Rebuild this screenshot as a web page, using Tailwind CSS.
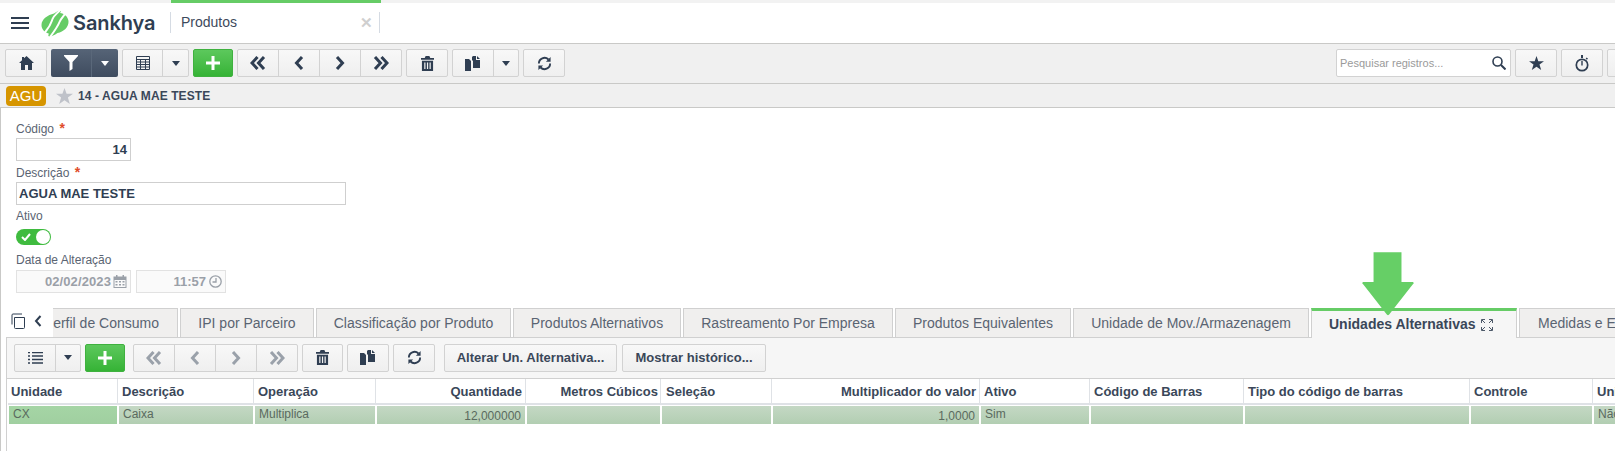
<!DOCTYPE html>
<html lang="en">
<head>
<meta charset="UTF-8" />
<title>Produtos</title>
<script src="https://cdn.jsdelivr.net/npm/@tailwindcss/browser@4"></script>
</head>
<body class="bg-white font-['Liberation_Sans',Arial,sans-serif] text-[#2f3e52]">
<svg class="hidden">
  <symbol id="i-caret" viewBox="0 0 8 5"><path d="M0 0h8L4 5z" fill="currentColor"/></symbol>
  <symbol id="i-first" viewBox="0 0 16 14"><path d="M7.5 1 2 7l5.500 6M14 1 8.500 7l5.500 6" fill="none" stroke="currentColor" stroke-width="3"/></symbol>
  <symbol id="i-prev" viewBox="0 0 10 14"><path d="M8 1 2.500 7 8 13" fill="none" stroke="currentColor" stroke-width="3"/></symbol>
  <symbol id="i-next" viewBox="0 0 10 14"><path d="M2 1l5.500 6L2 13" fill="none" stroke="currentColor" stroke-width="3"/></symbol>
  <symbol id="i-last" viewBox="0 0 16 14"><path d="M2 1l5.500 6L2 13M8.500 1 14 7l-5.500 6" fill="none" stroke="currentColor" stroke-width="3"/></symbol>
  <symbol id="i-trash" viewBox="0 0 14 16"><path d="M5 0h4l1 2h4v2H0V2h4zM1 5h12v11H1zm2.500 2v7h1.300V7zm2.900 0v7h1.300V7zm2.800 0v7h1.300V7z" fill="currentColor" fill-rule="evenodd"/></symbol>
  <symbol id="i-copy" viewBox="0 0 16 15"><path d="M0 3h4l2 2v10H0zM8 0h3v4h4v8H8V5L7 4V1z" fill="currentColor"/><path d="M12 0l3 3h-3z" fill="currentColor"/></symbol>
  <symbol id="i-sync" viewBox="0 0 16 16"><path d="M2 8a6 6 0 0 1 10.200-4.300M14 8a6 6 0 0 1-10.200 4.300" fill="none" stroke="currentColor" stroke-width="2"/><path d="M14.500 1v5h-5zM1.500 15v-5h5z" fill="currentColor"/></symbol>
  <symbol id="i-plus" viewBox="0 0 14 14"><path d="M5.500 0h3v5.500H14v3H8.500V14h-3V8.500H0v-3h5.500z" fill="currentColor"/></symbol>
</svg>

<div class="w-[1615px] h-[451px] overflow-hidden relative">
  <!-- top bar -->
  <div class="h-[3px] bg-[#f2f2f2] relative">
    <div class="absolute left-[171px] w-[210px] top-[0px] h-[3px] bg-[#66cc66]"></div>
  </div>
  <header class="h-[40px] flex items-center bg-white">
    <div class="ml-[11px] w-[18px] flex flex-col gap-[3px]">
      <span class="h-[2px] bg-[#2f3e52]"></span><span class="h-[2px] bg-[#2f3e52]"></span><span class="h-[2px] bg-[#2f3e52]"></span>
    </div>
    <svg class="ml-[12px] w-[28px] h-[27px] shrink-0" viewBox="0 0 28 27">
      <path d="M19 .5c1 0 1 1 .5 1.800L19 3c4 .5 8 3.500 8.500 8 .5 6-5 11-11 12-3 2-6 3.500-8 3.500-1 0-1.500-1-1-2l.5-.8C3 22 .5 19 .5 15 .5 9 7 5 13 3.500 15 2 17.500.5 19 .5z" fill="#66cc66"/>
      <path d="M20 -1C17 3 13 5 11.500 9 10 13 10 15 5 21 3 24 2 25 1 27" fill="none" stroke="#fff" stroke-width="2"/>
      <path d="M26 1C23 6 20 8 18.500 12 17 16 15 19 9 27" fill="none" stroke="#fff" stroke-width="2"/>
    </svg>
    <span class="ml-[4px] w-[85px] font-['Inter',sans-serif] font-semibold text-[20px] leading-none tracking-[-0.1px] text-[#2f3e52]">Sankhya</span>
    <div class="ml-[12px] w-[210px] h-[21px] mt-[-1px] border-x border-[#d5dbe3] flex items-center justify-between pl-[10px] pr-[6px]">
      <span class="text-[14px] text-[#3d4a5c]">Produtos</span>
      <span class="text-[#cfcfcf] text-[15px] leading-none font-bold">✕</span>
    </div>
  </header>

  <!-- main toolbar -->
  <div class="h-[41px] bg-[#f0f0f0] border-y border-[#c9c9c7] flex items-center pl-[5px] pr-0 pb-[1px] gap-[4px]">
    <button class="w-[42px] h-[28px] flex items-center justify-center rounded-[2px] border border-[#d2d2d2] bg-gradient-to-b from-[#f8f8f8] to-[#efefef]">
      <svg class="w-[15px] h-[14px]" viewBox="0 0 15 14"><path d="M7.500 0 15 7h-2v7H9V9H6v5H2V7H0l3-2.800V1h2v1.300z" fill="#2f3e52"/></svg>
    </button>
    <div class="w-[67px] h-[28px] flex rounded-[2px] bg-gradient-to-b from-[#566477] to-[#3f4c5f]">
      <span class="w-[41px] flex items-center justify-center border-r border-[#5a687a]">
        <svg class="w-[14px] h-[16px]" viewBox="0 0 14 16"><path d="M0 0h14v1L8.500 7v7l-3 2V7L0 1z" fill="#fff"/></svg>
      </span>
      <span class="flex-1 flex items-center justify-center"><svg class="w-[8px] h-[5px] text-white"><use href="#i-caret"/></svg></span>
    </div>
    <div class="w-[67px] h-[28px] flex rounded-[2px] border border-[#d2d2d2] bg-gradient-to-b from-[#f8f8f8] to-[#efefef]">
      <span class="w-[40px] flex items-center justify-center border-r border-[#d2d2d2]">
        <svg class="w-[14px] h-[14px]" viewBox="0 0 14 14"><path d="M.5.500h13v13H.5zM.5 3.500h13M.5 6h13M.5 8.500h13M.5 11h13M4.500 3.500v10M9.500 3.500v10" fill="none" stroke="#2f3e52"/></svg>
      </span>
      <span class="flex-1 flex items-center justify-center"><svg class="w-[8px] h-[5px]"><use href="#i-caret"/></svg></span>
    </div>
    <button class="w-[40px] h-[28px] flex items-center justify-center rounded-[2px] border border-[#3fb13f] bg-gradient-to-b from-[#5cc85c] to-[#35b335] text-white">
      <svg class="w-[14px] h-[14px]"><use href="#i-plus"/></svg>
    </button>
    <div class="w-[165px] h-[28px] flex rounded-[2px] border border-[#d2d2d2] bg-gradient-to-b from-[#f8f8f8] to-[#efefef] divide-x divide-[#d2d2d2]">
      <span class="flex-1 flex items-center justify-center"><svg class="w-[16px] h-[14px]"><use href="#i-first"/></svg></span>
      <span class="flex-1 flex items-center justify-center"><svg class="w-[10px] h-[14px]"><use href="#i-prev"/></svg></span>
      <span class="flex-1 flex items-center justify-center"><svg class="w-[10px] h-[14px]"><use href="#i-next"/></svg></span>
      <span class="flex-1 flex items-center justify-center"><svg class="w-[16px] h-[14px]"><use href="#i-last"/></svg></span>
    </div>
    <button class="w-[42px] h-[28px] flex items-center justify-center rounded-[2px] border border-[#d2d2d2] bg-gradient-to-b from-[#f8f8f8] to-[#efefef]">
      <svg class="w-[13px] h-[15px]"><use href="#i-trash"/></svg>
    </button>
    <div class="w-[67px] h-[28px] flex rounded-[2px] border border-[#d2d2d2] bg-gradient-to-b from-[#f8f8f8] to-[#efefef]">
      <span class="w-[41px] flex items-center justify-center border-r border-[#d2d2d2]"><svg class="w-[16px] h-[15px]"><use href="#i-copy"/></svg></span>
      <span class="flex-1 flex items-center justify-center"><svg class="w-[8px] h-[5px]"><use href="#i-caret"/></svg></span>
    </div>
    <button class="w-[42px] h-[28px] flex items-center justify-center rounded-[2px] border border-[#d2d2d2] bg-gradient-to-b from-[#f8f8f8] to-[#efefef]">
      <svg class="w-[15px] h-[15px]"><use href="#i-sync"/></svg>
    </button>

    <div class="ml-auto w-[175px] h-[28px] flex items-center justify-between pl-[3px] pr-[4px] rounded-[2px] border border-[#d2d2d2] bg-white">
      <span class="text-[11px] text-[#9a9a9a]">Pesquisar registros...</span>
      <svg class="w-[14px] h-[14px]" viewBox="0 0 14 14"><circle cx="5.500" cy="5.500" r="4.500" fill="none" stroke="#2f3e52" stroke-width="1.600"/><path d="M9 9l4.500 4.500" stroke="#2f3e52" stroke-width="2"/></svg>
    </div>
    <button class="w-[42px] h-[28px] flex items-center justify-center rounded-[2px] border border-[#d2d2d2] bg-gradient-to-b from-[#f8f8f8] to-[#efefef]">
      <svg class="w-[15px] h-[14px]" viewBox="0 0 15 14"><path d="M7.500 0l1.800 5.200H15l-4.500 3.300L12.200 14 7.500 10.700 2.800 14l1.700-5.500L0 5.200h5.700z" fill="#2f3e52"/></svg>
    </button>
    <button class="w-[42px] h-[28px] flex items-center justify-center rounded-[2px] border border-[#d2d2d2] bg-gradient-to-b from-[#f8f8f8] to-[#efefef]">
      <svg class="w-[14px] h-[17px]" viewBox="0 0 14 17"><circle cx="7" cy="10" r="5.700" fill="none" stroke="#2f3e52" stroke-width="1.700"/><path d="M6 0h2v3H6zM6.300 6h1.400v4.500H6.300zM11.500 2.500l1.500 1-1 1.200-1.300-1z" fill="#2f3e52"/></svg>
    </button>
    <button class="w-[42px] h-[28px] shrink-0 mr-[-34px] rounded-[2px] border border-[#d2d2d2] bg-gradient-to-b from-[#f8f8f8] to-[#efefef]"></button>
  </div>

  <!-- record title -->
  <div class="h-[24px] bg-[#f0f0f0] border-b border-[#c9c9c7] flex items-center pl-[6px]">
    <span class="w-[40px] h-[20px] rounded-[4px] bg-[#d69500] text-white text-[15px] leading-[20px] text-center">AGU</span>
    <svg class="ml-[10px] w-[17px] h-[16px]" viewBox="0 0 17 16"><path d="M8.500 0l2.100 5.800H17l-5.100 3.800L13.800 16 8.500 12.200 3.200 16l1.900-6.400L0 5.800h6.400z" fill="#bfc2c9"/></svg>
    <span class="ml-[5px] text-[12px] font-bold tracking-[0.1px] text-[#3a4759]">14 - AGUA MAE TESTE</span>
  </div>

  <!-- form -->
  <div class="border-l border-[#c9c9c7] h-[343px] flex flex-col">
    <div class="pl-[15px] pt-[12px] h-[200px] flex flex-col">
      <label class="h-[18px] text-[12px] leading-[16px] text-[#5a6472]">Código <span class="text-[#e04b2a] text-[14px] font-bold ml-[2px]">*</span></label>
      <div class="w-[115px] h-[23px] border border-[#cfcfcf] text-right pr-[3px] text-[13px] leading-[21px] font-bold">14</div>
      <label class="mt-[3px] h-[18px] text-[12px] leading-[16px] text-[#5a6472]">Descrição <span class="text-[#e04b2a] text-[14px] font-bold ml-[2px]">*</span></label>
      <div class="w-[330px] h-[23px] border border-[#cfcfcf] pl-[2px] text-[13px] leading-[21px] font-bold">AGUA MAE TESTE</div>
      <label class="mt-[3px] h-[18px] text-[12px] leading-[16px] text-[#5a6472]">Ativo</label>
      <div class="mt-[3px] w-[35px] h-[16px] rounded-full bg-[#3fbb3f] flex items-center justify-between pl-[5px] pr-[1px]">
        <svg class="w-[10px] h-[8px]" viewBox="0 0 10 8"><path d="M1 4l3 3 5-6" fill="none" stroke="#fff" stroke-width="2"/></svg>
        <span class="w-[14px] h-[14px] rounded-full bg-white"></span>
      </div>
      <label class="mt-[7px] h-[18px] text-[12px] leading-[16px] text-[#5a6472]">Data de Alteração</label>
      <div class="flex gap-[5px]">
        <div class="w-[115px] h-[23px] border border-[#e2e2e2] bg-[#fafafa] flex items-center justify-end gap-[2px] pr-[3px] text-[13px] font-bold tracking-[0.1px] text-[#9aa0a8]">
          02/02/2023
          <svg class="w-[14px] h-[13px]" viewBox="0 0 13 13"><path d="M0 1.500h2.500V0h1.500v1.500h5V0h1.500v1.500H13V13H0zM1 5v7h11V5zm1 1h2v1.500H2zm3.500 0h2v1.500h-2zM9 6h2v1.500H9zM2 9h2v1.500H2zm3.500 0h2v1.500h-2zM9 9h2v1.500H9z" fill="#9aa0a8" fill-rule="evenodd"/></svg>
        </div>
        <div class="w-[90px] h-[23px] border border-[#e2e2e2] bg-[#fafafa] flex items-center justify-end gap-[3px] pr-[3px] text-[13px] font-bold text-[#9aa0a8]">
          11:57
          <svg class="w-[13px] h-[13px]" viewBox="0 0 13 13"><circle cx="6.500" cy="6.500" r="5.700" fill="none" stroke="#9aa0a8" stroke-width="1.300"/><path d="M7 3v4H3.500" fill="none" stroke="#9aa0a8" stroke-width="1.300"/></svg>
        </div>
      </div>
    </div>

    <!-- tabs -->
    <div class="h-[29px] flex items-end relative">
      <div class="absolute left-0 top-0 w-[52px] h-[29px] bg-white z-10 flex items-center pl-[9px] pb-[3px] gap-[8px]">
        <svg class="w-[16px] h-[16px]" viewBox="0 0 16 16"><path d="M4.500 4.500h10v10a1 1 0 0 1-1 1h-8a1 1 0 0 1-1-1zM2 11.500V2a1 1 0 0 1 1-1h9" fill="none" stroke="#2f3e52"/></svg>
        <svg class="w-[8px] h-[12px]" viewBox="0 0 8 12"><path d="M6.500 1 2 6l4.500 5" fill="none" stroke="#2f3e52" stroke-width="2"/></svg>
      </div>
      <div class="flex ml-[5px] gap-[2px] text-[14px] text-[#5a6472] whitespace-nowrap">
        <span class="w-[172px] h-[29px] pr-[18px] text-right leading-[28px] bg-[#f0efee] border border-b-0 border-[#d0d0d0]">Perfil de Consumo</span>
        <span class="w-[134px] h-[29px] text-center leading-[28px] bg-[#f0efee] border border-b-0 border-[#d0d0d0]">IPI por Parceiro</span>
        <span class="w-[195px] h-[29px] text-center leading-[28px] bg-[#f0efee] border border-b-0 border-[#d0d0d0]">Classificação por Produto</span>
        <span class="w-[168px] h-[29px] text-center leading-[28px] bg-[#f0efee] border border-b-0 border-[#d0d0d0]">Produtos Alternativos</span>
        <span class="w-[210px] h-[29px] text-center leading-[28px] bg-[#f0efee] border border-b-0 border-[#d0d0d0]">Rastreamento Por Empresa</span>
        <span class="w-[176px] h-[29px] text-center leading-[28px] bg-[#f0efee] border border-b-0 border-[#d0d0d0]">Produtos Equivalentes</span>
        <span class="w-[236px] h-[29px] text-center leading-[28px] bg-[#f0efee] border border-b-0 border-[#d0d0d0]">Unidade de Mov./Armazenagem</span>
        <span class="w-[206px] h-[30px] mb-[-1px] z-10 flex items-center pl-[17px] gap-[5px] bg-[#f6f6f6] border-x border-[#d0d0d0] border-t-[3px] border-t-[#66cc66] font-bold text-[#3a4759]">Unidades Alternativas
          <svg class="w-[12px] h-[12px]" viewBox="0 0 12 12"><path d="M.5 4V.5H4M8 .5h3.500V4M.5 8v3.500H4M8 11.500h3.500V8M1 1l3 3M11 1 8 4M1 11l3-3M11 11 8 8" fill="none" stroke="#3a4759" stroke-width=".9"/></svg>
        </span>
        <span class="w-[180px] h-[29px] pl-[18px] leading-[28px] bg-[#f0efee] border border-b-0 border-[#d0d0d0]">Medidas e Estoque</span>
      </div>
    </div>

    <!-- panel -->
    <div class="ml-[5px] flex-1 border-l border-t border-[#d0d0d0]">
      <div class="h-[41px] bg-[#f6f6f6] border-b border-[#d0d0d0] flex items-center pl-[7px] pb-[1px] gap-[4px]">
        <div class="w-[67px] h-[28px] flex rounded-[2px] border border-[#d2d2d2] bg-gradient-to-b from-[#f8f8f8] to-[#efefef]">
          <span class="w-[41px] flex items-center justify-center border-r border-[#d2d2d2]">
            <svg class="w-[15px] h-[12px]" viewBox="0 0 15 12"><path d="M0 .5h2M4 .5h11M0 4h2M4 4h11M0 7.500h2M4 7.500h11M0 11h2M4 11h11" stroke="#2f3e52" stroke-width="1.300"/></svg>
          </span>
          <span class="flex-1 flex items-center justify-center"><svg class="w-[8px] h-[5px]"><use href="#i-caret"/></svg></span>
        </div>
        <button class="w-[40px] h-[28px] flex items-center justify-center rounded-[2px] border border-[#3fb13f] bg-gradient-to-b from-[#5cc85c] to-[#35b335] text-white">
          <svg class="w-[14px] h-[14px]"><use href="#i-plus"/></svg>
        </button>
        <div class="ml-[4px] w-[165px] h-[28px] flex rounded-[2px] border border-[#d2d2d2] bg-gradient-to-b from-[#f8f8f8] to-[#efefef] divide-x divide-[#d2d2d2] text-[#9aa1aa]">
          <span class="flex-1 flex items-center justify-center"><svg class="w-[16px] h-[14px]"><use href="#i-first"/></svg></span>
          <span class="flex-1 flex items-center justify-center"><svg class="w-[10px] h-[14px]"><use href="#i-prev"/></svg></span>
          <span class="flex-1 flex items-center justify-center"><svg class="w-[10px] h-[14px]"><use href="#i-next"/></svg></span>
          <span class="flex-1 flex items-center justify-center"><svg class="w-[16px] h-[14px]"><use href="#i-last"/></svg></span>
        </div>
        <button class="w-[41px] h-[28px] flex items-center justify-center rounded-[2px] border border-[#d2d2d2] bg-gradient-to-b from-[#f8f8f8] to-[#efefef]">
          <svg class="w-[13px] h-[15px]"><use href="#i-trash"/></svg>
        </button>
        <button class="w-[42px] h-[28px] flex items-center justify-center rounded-[2px] border border-[#d2d2d2] bg-gradient-to-b from-[#f8f8f8] to-[#efefef]">
          <svg class="w-[16px] h-[15px]"><use href="#i-copy"/></svg>
        </button>
        <button class="w-[42px] h-[28px] flex items-center justify-center rounded-[2px] border border-[#d2d2d2] bg-gradient-to-b from-[#f8f8f8] to-[#efefef]">
          <svg class="w-[15px] h-[15px]"><use href="#i-sync"/></svg>
        </button>
        <button class="ml-[5px] w-[173px] h-[28px] rounded-[2px] border border-[#d2d2d2] bg-gradient-to-b from-[#f8f8f8] to-[#efefef] text-[13px] font-bold text-[#3a4759]">Alterar Un. Alternativa...</button>
        <button class="ml-[1px] w-[144px] h-[28px] rounded-[2px] border border-[#d2d2d2] bg-gradient-to-b from-[#f8f8f8] to-[#efefef] text-[13px] font-bold text-[#3a4759]">Mostrar histórico...</button>
      </div>

      <!-- grid -->
      <div class="grid grid-cols-[110px_136px_122px_150px_135px_111px_208px_110px_154px_226px_123px_100px] w-[1700px] ml-[1px] whitespace-nowrap">
        <div class="h-[26px] border-r border-b-2 border-[#dfe2e6] pl-[3px] text-[13px] leading-[25px] font-bold text-[#3a4759]">Unidade</div>
        <div class="h-[26px] border-r border-b-2 border-[#dfe2e6] px-[4px] text-[13px] leading-[25px] font-bold text-[#3a4759]">Descrição</div>
        <div class="h-[26px] border-r border-b-2 border-[#dfe2e6] px-[4px] text-[13px] leading-[25px] font-bold text-[#3a4759]">Operação</div>
        <div class="h-[26px] border-r border-b-2 border-[#dfe2e6] pr-[3px] text-[13px] leading-[25px] font-bold text-[#3a4759] text-right">Quantidade</div>
        <div class="h-[26px] border-r border-b-2 border-[#dfe2e6] pr-[2px] text-[13px] leading-[25px] font-bold text-[#3a4759] text-right">Metros Cúbicos</div>
        <div class="h-[26px] border-r border-b-2 border-[#dfe2e6] pl-[5px] text-[13px] leading-[25px] font-bold text-[#3a4759]">Seleção</div>
        <div class="h-[26px] border-r border-b-2 border-[#dfe2e6] pr-[3px] text-[13px] leading-[25px] font-bold text-[#3a4759] text-right">Multiplicador do valor</div>
        <div class="h-[26px] border-r border-b-2 border-[#dfe2e6] px-[4px] text-[13px] leading-[25px] font-bold text-[#3a4759]">Ativo</div>
        <div class="h-[26px] border-r border-b-2 border-[#dfe2e6] px-[4px] text-[13px] leading-[25px] font-bold text-[#3a4759]">Código de Barras</div>
        <div class="h-[26px] border-r border-b-2 border-[#dfe2e6] px-[4px] text-[13px] leading-[25px] font-bold text-[#3a4759]">Tipo do código de barras</div>
        <div class="h-[26px] border-r border-b-2 border-[#dfe2e6] px-[4px] text-[13px] leading-[25px] font-bold text-[#3a4759]">Controle</div>
        <div class="h-[26px] border-b-2 border-[#dfe2e6] px-[4px] text-[13px] leading-[25px] font-bold text-[#3a4759]">Unidade</div>

        <div class="mt-[1px] h-[18px] ml-[1px] mr-[1px] bg-gradient-to-b from-[#a5d5a5] to-[#a0cfa0] px-[4px] text-[12px] leading-[17px] text-[#5a6a5e]">CX</div>
        <div class="mt-[1px] h-[18px] ml-[1px] mr-[1px] bg-gradient-to-b from-[#c4d8c4] to-[#b2ceb2] px-[4px] text-[12px] leading-[17px] text-[#5a6a5e]">Caixa</div>
        <div class="mt-[1px] h-[18px] ml-[1px] mr-[1px] bg-gradient-to-b from-[#c4d8c4] to-[#b2ceb2] px-[4px] text-[12px] leading-[17px] text-[#5a6a5e]">Multiplica</div>
        <div class="mt-[1px] h-[18px] ml-[1px] mr-[1px] bg-gradient-to-b from-[#c4d8c4] to-[#b2ceb2] px-[4px] text-[12px] leading-[21px] text-[#5a6a5e] text-right">12,000000</div>
        <div class="mt-[1px] h-[18px] ml-[1px] mr-[1px] bg-gradient-to-b from-[#c4d8c4] to-[#b2ceb2]"></div>
        <div class="mt-[1px] h-[18px] ml-[1px] mr-[1px] bg-gradient-to-b from-[#c4d8c4] to-[#b2ceb2]"></div>
        <div class="mt-[1px] h-[18px] ml-[1px] mr-[1px] bg-gradient-to-b from-[#c4d8c4] to-[#b2ceb2] px-[4px] text-[12px] leading-[21px] text-[#5a6a5e] text-right">1,0000</div>
        <div class="mt-[1px] h-[18px] ml-[1px] mr-[1px] bg-gradient-to-b from-[#c4d8c4] to-[#b2ceb2] px-[4px] text-[12px] leading-[17px] text-[#5a6a5e]">Sim</div>
        <div class="mt-[1px] h-[18px] ml-[1px] mr-[1px] bg-gradient-to-b from-[#c4d8c4] to-[#b2ceb2]"></div>
        <div class="mt-[1px] h-[18px] ml-[1px] mr-[1px] bg-gradient-to-b from-[#c4d8c4] to-[#b2ceb2]"></div>
        <div class="mt-[1px] h-[18px] ml-[1px] mr-[1px] bg-gradient-to-b from-[#c4d8c4] to-[#b2ceb2]"></div>
        <div class="mt-[1px] h-[18px] ml-[1px] bg-gradient-to-b from-[#c4d8c4] to-[#b2ceb2] px-[4px] text-[12px] leading-[17px] text-[#5a6a5e]">Não</div>
      </div>
    </div>
  </div>

  <!-- annotation arrow drawn over the tab -->
  <svg class="absolute left-[1362px] top-[252px] w-[52px] h-[64px] z-20" viewBox="0 0 54 66"><path d="M12 0h29v31h11a1 1 0 0 1 1 2L28 65a1.500 1.500 0 0 1-2 0L1 33a1 1 0 0 1 1-2h10z" fill="#66cf66"/></svg>
</div>
</body>
</html>
